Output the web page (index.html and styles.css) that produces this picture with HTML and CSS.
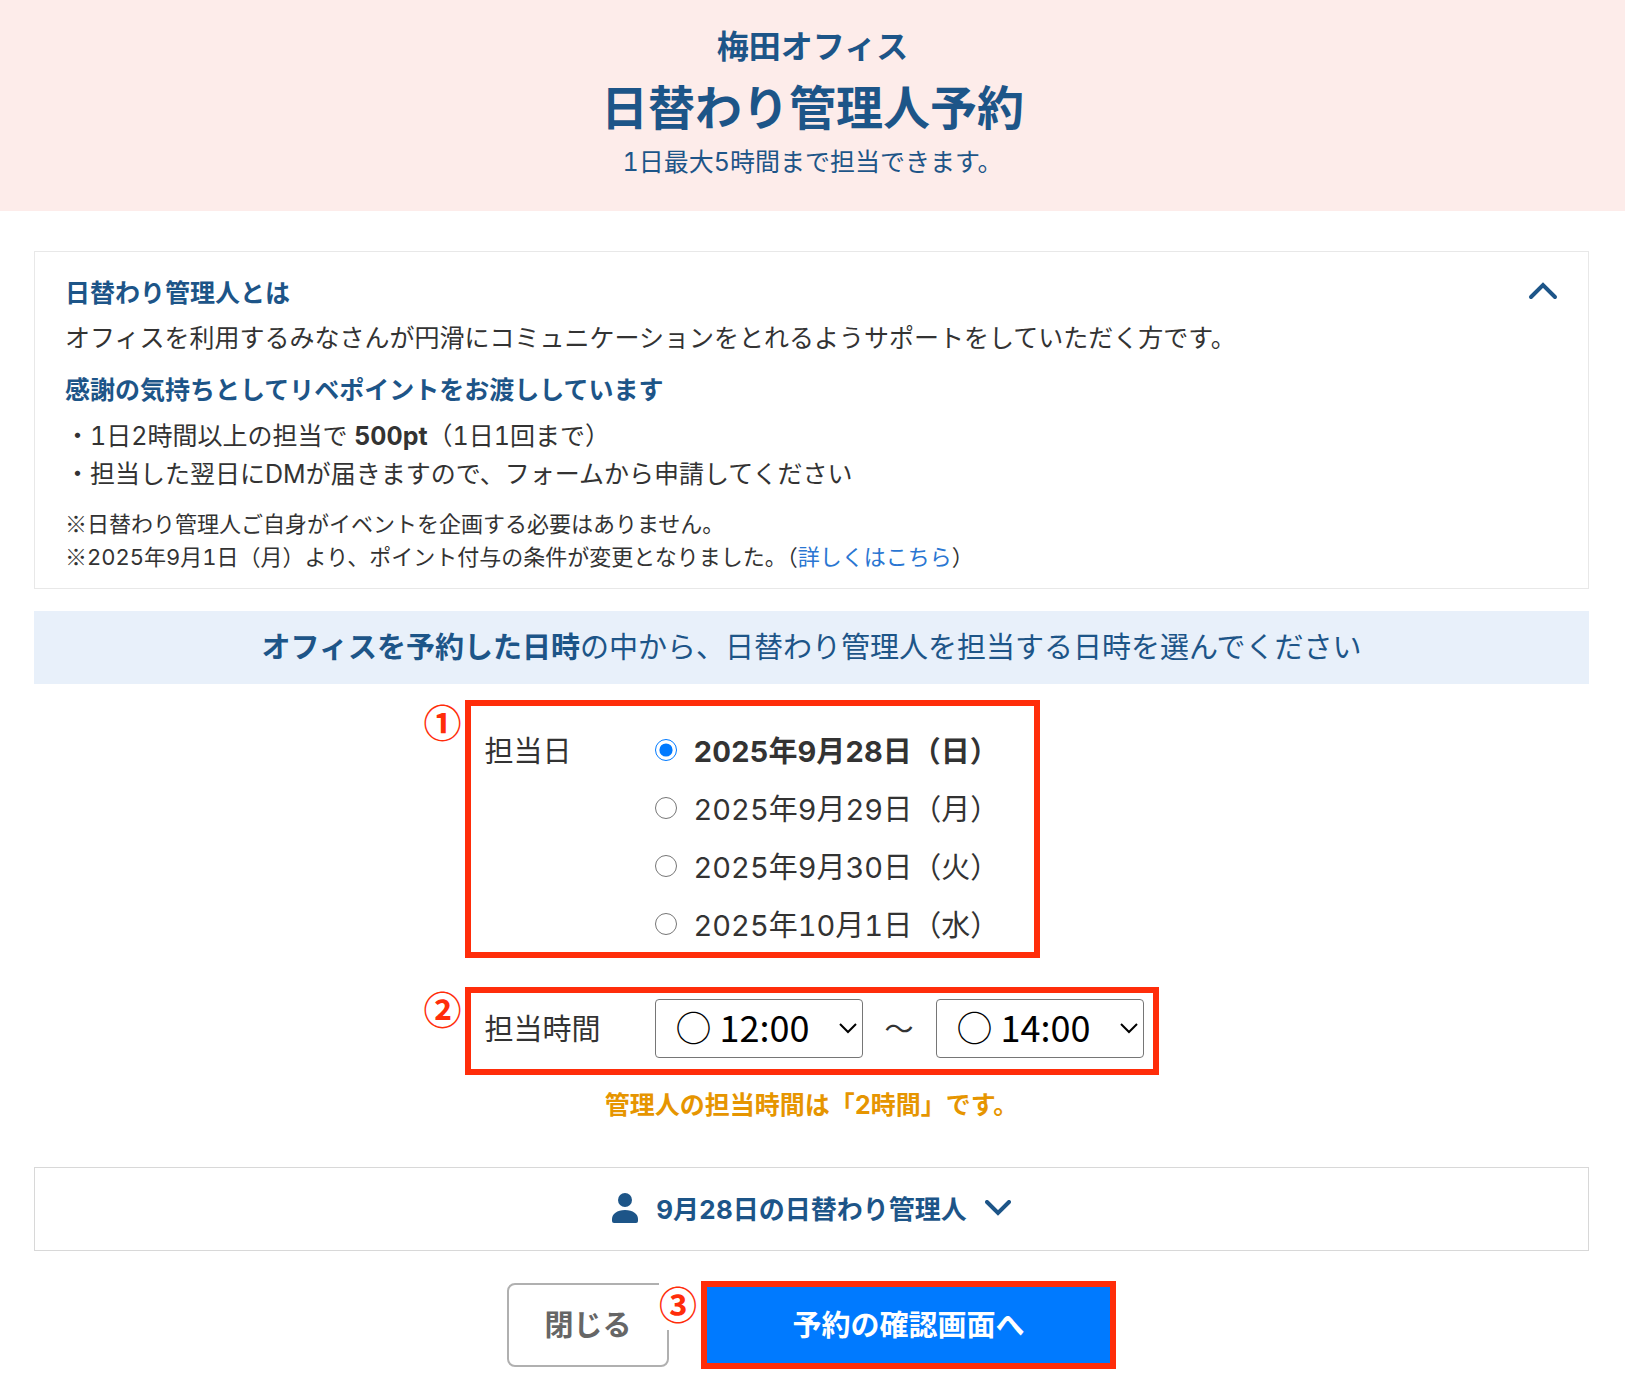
FILE: index.html
```
<!DOCTYPE html>
<html lang="ja">
<head>
    <meta charset="UTF-8">
    <meta name="viewport" content="width=device-width, initial-scale=1.0">
    <title>日替わり管理人予約</title>
    <link rel="stylesheet" href="styles.css">
</head>
<body>

<header class="page-header">
    <p class="office">梅田オフィス</p>
    <h1>日替わり管理人予約</h1>
    <p class="lead">1日最大5時間まで担当できます。</p>
</header>

<main>
    <!-- About -->
    <section class="about">
        <div class="about-head">
            <h2>日替わり管理人とは</h2>
            <button type="button" class="toggle" aria-label="閉じる">
                <svg width="30" height="18" viewBox="0 0 30 18"><path d="M3 15 L15 3 L27 15"/></svg>
            </button>
        </div>
        <p>オフィスを利用するみなさんが円滑にコミュニケーションをとれるようサポートをしていただく方です。</p>
        <h2 class="thanks">感謝の気持ちとしてリベポイントをお渡ししています</h2>
        <p>・1日2時間以上の担当で <strong>500pt</strong>（1日1回まで）</p>
        <p>・担当した翌日にDMが届きますので、フォームから申請してください</p>
        <p class="note"><span class="mark">※</span>日替わり管理人ご自身がイベントを企画する必要はありません。<br><span class="mark">※</span>2025年9月1日（月）より、ポイント付与の条件が変更となりました。（<a href="#">詳しくはこちら</a>）</p>
    </section>

    <p class="notice"><strong>オフィスを予約した日時</strong>の中から、日替わり管理人を担当する日時を選んでください</p>

    <!-- Form -->
    <form class="booking">
        <div class="frame days" role="radiogroup" aria-labelledby="dayLabel">
            <span class="step">①</span>
            <span class="label" id="dayLabel">担当日</span>
            <div class="options">
                <label><input type="radio" name="day" checked><span>2025年9月28日（日）</span></label>
                <label><input type="radio" name="day"><span>2025年9月29日（月）</span></label>
                <label><input type="radio" name="day"><span>2025年9月30日（火）</span></label>
                <label><input type="radio" name="day"><span>2025年10月1日（水）</span></label>
            </div>
        </div>

        <div class="frame times">
            <span class="step">②</span>
            <label class="label" for="start">担当時間</label>
            <div class="select">
                <select id="start"><option>○ 12:00</option></select>
                <svg width="18" height="11" viewBox="0 0 18 11"><path d="M1 1 L9 9 L17 1"/></svg>
            </div>
            <span class="tilde">～</span>
            <div class="select">
                <select id="end" aria-label="終了時間"><option>○ 14:00</option></select>
                <svg width="18" height="11" viewBox="0 0 18 11"><path d="M1 1 L9 9 L17 1"/></svg>
            </div>
        </div>
    </form>

    <p class="total">管理人の担当時間は「2時間」です。</p>

    <button type="button" class="managers">
        <svg class="person" width="26" height="30" viewBox="0 0 26 30"><circle cx="13" cy="7" r="7"/><path d="M0 28 V26 C0 21 5 17 13 17 C21 17 26 21 26 26 V28 Q26 30 24 30 H2 Q0 30 0 28 Z"/></svg>
        <span>9月28日の日替わり管理人</span>
        <svg class="chevron" width="26" height="16" viewBox="0 0 26 16"><path d="M2 2 L13 13 L24 2"/></svg>
    </button>

    <div class="actions">
        <button type="button" class="close">閉じる</button>
        <div class="confirm-wrap">
            <span class="step">③</span>
            <button type="submit" class="confirm">予約の確認画面へ</button>
        </div>
    </div>
</main>

</body>
</html>
```
FILE: styles.css
```
* {
    box-sizing: border-box;
}
body {
    margin: 0;
    background: #fff;
    color: #333;
    font-family: Inter, "Noto Sans CJK JP", sans-serif;
    font-variant-numeric: tabular-nums;
    font-size: 25px;
}
h1, h2, p {
    margin: 0;
}
button, select {
    font: inherit;
    font-variant-numeric: inherit;
}

.page-header {
    padding: 27px 0 33px;
    background: #fdecea;
    color: #1d5588;
    text-align: center;
}
.office {
    font-size: 32px;
    font-weight: 700;
    line-height: 40px;
}
h1 {
    margin: 9px 0 6px;
    font-size: 47px;
    line-height: 64px;
}
.lead {
    line-height: 32px;
}

main {
    padding: 40px 36px 30px 34px;
}

.about {
    padding: 25px 30px 14px;
    border: 1px solid #e8e8e8;
    line-height: 38px;
}
.about-head {
    display: flex;
    justify-content: space-between;
    align-items: flex-start;
    margin-bottom: 10px;
}
.about h2 {
    color: #1d5588;
    font-size: 25px;
    line-height: 32px;
}
.about .thanks {
    margin: 17px 0 11px;
}
.toggle {
    display: flex;
    padding: 5px 0 0;
    border: 0;
    background: none;
}
.toggle path, .chevron path {
    fill: none;
    stroke: #1d5588;
    stroke-width: 4;
    stroke-linecap: round;
}
.note {
    margin-top: 15px;
    font-size: 22px;
    line-height: 33px;
}
.note a {
    color: #2a76d2;
    text-decoration: none;
}
.mark {
    font-family: "Noto Sans CJK JP", sans-serif;
    line-height: 1;
}

.notice {
    margin-top: 22px;
    background: #e8f0fa;
    color: #1d5588;
    font-size: 29px;
    line-height: 73px;
    text-align: center;
}

.booking {
    max-width: 694px;
    margin: 16px auto 0;
    font-size: 29px;
}
.frame {
    position: relative;
    display: flex;
    border: 6px solid #ff2d0a;
}
.step {
    position: absolute;
    top: -4px;
    left: -47px;
    color: #ff2d0a;
    font-family: "Noto Sans CJK JP", sans-serif;
    font-size: 38px;
    font-weight: 700;
    line-height: 38px;
}
.label {
    width: 170px;
}
.days {
    width: 575px;
    padding: 26px 0 6px 14px;
    line-height: 40px;
}
.options {
    display: grid;
    gap: 18px;
}
.options label {
    display: flex;
    align-items: flex-start;
    gap: 17px;
}
.options input {
    width: 22px;
    height: 22px;
    margin: 7px 0 0;
    accent-color: #007aff;
}
.options input:checked + span {
    font-weight: 700;
}
.times {
    align-items: center;
    margin-top: 29px;
    padding: 6px 9px 11px 14px;
}
.times .label, .tilde {
    padding-bottom: 4px;
}
.select {
    position: relative;
}
.select select {
    display: block;
    width: 208px;
    height: 59px;
    padding: 0 20px 5px;
    border: 1px solid #767676;
    border-radius: 4px;
    background: #fff;
    color: #000;
    font-family: "Noto Sans CJK JP", sans-serif;
    font-size: 36px;
    appearance: none;
}
.select svg {
    position: absolute;
    top: 24px;
    right: 6px;
    pointer-events: none;
}
.select path {
    fill: none;
    stroke: #000;
    stroke-width: 2;
}
.tilde {
    flex: 1;
    text-align: center;
}

.total {
    margin-top: 14px;
    color: #e69500;
    font-weight: 700;
    line-height: 32px;
    text-align: center;
}

.managers {
    display: flex;
    justify-content: center;
    align-items: center;
    gap: 18px;
    width: 100%;
    height: 84px;
    margin-top: 46px;
    padding-bottom: 4px;
    border: 1px solid #d8d8d8;
    background: #fff;
    color: #1d5588;
    font-size: 26px;
    font-weight: 700;
}
.person {
    fill: #1d5588;
}

.actions {
    display: flex;
    justify-content: center;
    align-items: center;
    gap: 32px;
    margin-top: 30px;
    font-size: 29px;
}
.close {
    width: 162px;
    height: 84px;
    padding-bottom: 5px;
    border: 2px solid #b0b0b0;
    border-radius: 8px;
    background: #fff;
    color: #666;
    font-weight: 700;
}
.confirm-wrap {
    position: relative;
}
.confirm-wrap .step {
    top: 0;
    left: -42px;
    padding: 3px 2px 8px 0;
    background: #fff;
}
.confirm {
    width: 415px;
    height: 88px;
    padding-bottom: 5px;
    border: 6px solid #ff2d0a;
    background: #007aff;
    color: #fff;
    font-weight: 700;
}
```
